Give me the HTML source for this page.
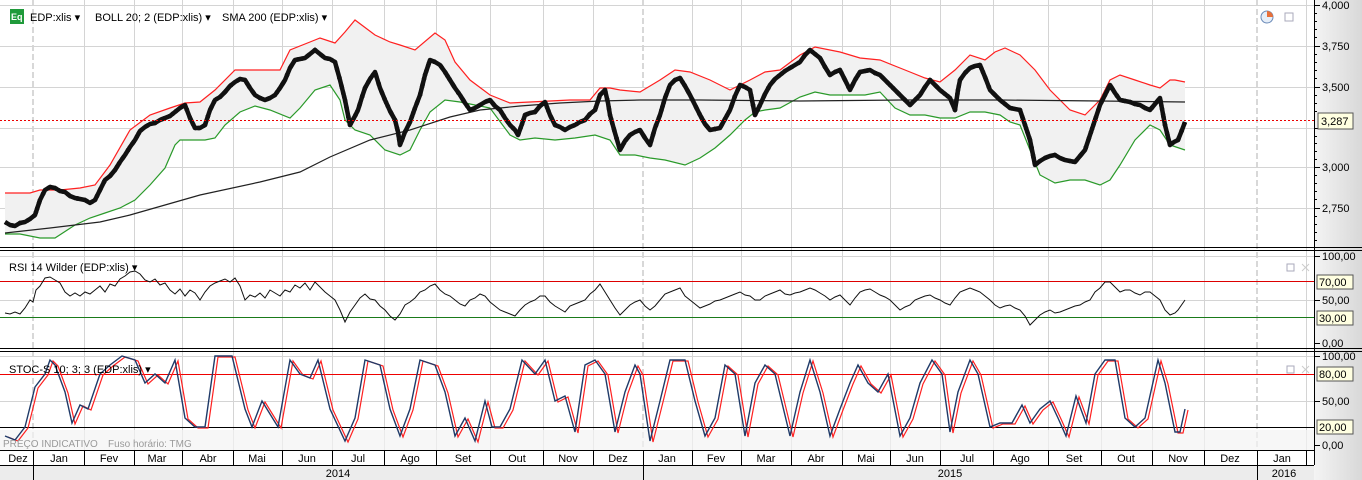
<!DOCTYPE html>
<html><head><meta charset="utf-8"><style>
html,body{margin:0;padding:0;width:1362px;height:480px;overflow:hidden;background:#fff;font-family:"Liberation Sans",Tahoma,sans-serif;}
svg{display:block}
text{font-family:"Liberation Sans",sans-serif;font-size:11px;fill:#000}
</style></head><body>
<svg width="1362" height="480" viewBox="0 0 1362 480" xmlns="http://www.w3.org/2000/svg">
<defs>
<linearGradient id="ax" x1="0" x2="1" y1="0" y2="0"><stop offset="0" stop-color="#f4f4f4"/><stop offset="1" stop-color="#d8d8d8"/></linearGradient>
</defs>
<rect x="0" y="0" width="1362" height="480" fill="#fff"/>
<rect x="1314" y="0" width="48" height="480" fill="url(#ax)"/>
<g stroke="#d4d4d4" stroke-width="1">
<path d="M84.5 0V450M134.5 0V450M182.5 0V450M233.5 0V450M282.5 0V450M332.5 0V450M384.5 0V450M436.5 0V450M490.5 0V450M543.5 0V450M593.5 0V450M692.5 0V450M741.5 0V450M791.5 0V450M842.5 0V450M890.5 0V450M940.5 0V450M993.5 0V450M1048.5 0V450M1101.5 0V450M1152.5 0V450M1204.5 0V450M1306.5 0V450"/>
</g>
<g stroke="#d8d8d8" stroke-width="2" stroke-dasharray="6,3">
<path d="M33 0V450M643 0V450M1257 0V450"/>
</g>
<g stroke="#d4d4d4"><path d="M0 5.5H1314M0 46.5H1314M0 87.5H1314M0 128.5H1314M0 167.5H1314M0 208.5H1314M0 300.5H1314M0 401.5H1314M0 256.5H1314M0 356.5H1314"/></g>
<polygon fill="#f1f1f1" points="5,193 30,193 40,190 60,190 80,188 95,185 110,165 130,130 150,115 170,108 185,103 200,102 215,90 235,70 260,70 280,70 290,50 310,42 320,38 335,43 345,32 355,20 375,35 390,42 400,45 415,50 435,33 445,40 455,62 470,80 490,95 510,103 530,102 550,101 570,100 590,100 600,88 610,88 620,90 640,92 660,80 675,70 690,72 710,80 730,90 750,80 765,72 780,70 800,55 815,47 840,52 860,58 880,60 900,68 910,72 925,78 940,82 955,70 970,55 985,60 995,52 1005,48 1020,55 1035,70 1050,90 1070,110 1085,115 1100,100 1110,80 1120,75 1135,80 1150,85 1160,88 1170,80 1175,80 1185,82 1185,150 1170,145 1160,130 1150,125 1135,140 1120,165 1110,180 1100,185 1085,180 1070,180 1055,183 1040,175 1030,150 1020,125 1010,122 1000,115 985,112 970,112 955,118 940,118 925,115 910,115 895,108 880,92 865,95 845,95 830,95 815,92 800,97 780,108 765,110 755,112 745,120 730,135 715,148 700,158 685,165 665,160 650,158 635,155 620,155 610,140 595,135 575,138 555,140 535,138 520,140 510,135 490,108 475,105 460,102 445,100 430,112 420,130 410,150 400,155 385,150 370,135 355,130 345,120 340,100 330,85 315,90 300,108 290,118 270,110 255,106 240,112 225,125 215,138 205,140 180,140 175,145 165,168 150,185 135,200 120,208 105,213 90,218 75,225 55,238 40,238 20,234 5,234"/>
<polyline fill="none" stroke="#ff2020" stroke-width="1.2" points="5,193 30,193 40,190 60,190 80,188 95,185 110,165 130,130 150,115 170,108 185,103 200,102 215,90 235,70 260,70 280,70 290,50 310,42 320,38 335,43 345,32 355,20 375,35 390,42 400,45 415,50 435,33 445,40 455,62 470,80 490,95 510,103 530,102 550,101 570,100 590,100 600,88 610,88 620,90 640,92 660,80 675,70 690,72 710,80 730,90 750,80 765,72 780,70 800,55 815,47 840,52 860,58 880,60 900,68 910,72 925,78 940,82 955,70 970,55 985,60 995,52 1005,48 1020,55 1035,70 1050,90 1070,110 1085,115 1100,100 1110,80 1120,75 1135,80 1150,85 1160,88 1170,80 1175,80 1185,82"/>
<polyline fill="none" stroke="#2a9a2a" stroke-width="1.2" points="5,234 20,234 40,238 55,238 75,225 90,218 105,213 120,208 135,200 150,185 165,168 175,145 180,140 205,140 215,138 225,125 240,112 255,106 270,110 290,118 300,108 315,90 330,85 340,100 345,120 355,130 370,135 385,150 400,155 410,150 420,130 430,112 445,100 460,102 475,105 490,108 510,135 520,140 535,138 555,140 575,138 595,135 610,140 620,155 635,155 650,158 665,160 685,165 700,158 715,148 730,135 745,120 755,112 765,110 780,108 800,97 815,92 830,95 845,95 865,95 880,92 895,108 910,115 925,115 940,118 955,118 970,112 985,112 1000,115 1010,122 1020,125 1030,150 1040,175 1055,183 1070,180 1085,180 1100,185 1110,180 1120,165 1135,140 1150,125 1160,130 1170,145 1185,150"/>
<polyline fill="none" stroke="#222" stroke-width="1.2" points="5,233 50,228 100,222 130,215 200,195 260,182 300,172 330,157 370,140 410,130 450,117 480,110 520,106 560,103 600,101 640,100 700,100 800,101 900,100 1000,100 1100,101 1185,102"/>
<g fill="none" stroke-linejoin="round">
<polyline id="pr" stroke="#111" stroke-width="4.5" points="5,222 10,225 15,226 20,223 25,222 30,219 35,215 40,200 45,190 50,187 55,188 60,191 65,192 70,196 75,198 80,199 85,200 90,203 95,200 100,190 105,180 110,176 115,170 120,162 125,155 130,147 135,140 140,131 145,127 150,124 155,123 160,120 165,118 170,116 175,112 180,108 185,105 190,118 195,128 200,128 205,125 210,110 215,100 220,97 225,92 230,86 235,82 240,79 245,80 250,88 255,95 260,98 265,100 270,98 275,95 280,88 285,80 290,68 295,60 300,59 305,58 310,54 315,50 320,54 325,58 330,59 335,62 340,80 345,100 348,115 350,125 355,116 358,110 362,97 365,88 370,79 375,72 380,88 385,100 390,111 395,120 398,132 400,145 405,132 410,122 415,108 420,95 425,75 430,60 435,62 440,65 445,72 450,80 455,88 460,95 465,103 470,110 475,108 480,105 485,102 490,100 495,106 500,110 505,118 510,125 515,130 518,135 522,124 525,115 530,113 535,112 540,106 545,102 550,115 555,125 560,127 565,130 570,127 575,125 580,122 585,120 590,114 595,110 600,95 605,90 608,103 610,115 615,133 620,150 625,141 630,135 635,132 640,130 645,138 650,145 655,128 660,115 665,98 670,85 675,80 680,78 685,86 690,95 695,105 700,115 705,124 710,130 715,129 720,128 725,119 730,110 735,96 740,85 745,87 750,90 755,115 760,105 765,94 770,85 775,79 780,75 785,71 790,68 795,65 800,62 805,55 810,50 815,54 820,58 825,67 830,75 835,72 840,70 845,80 850,90 855,80 860,72 865,71 870,70 875,73 880,75 885,80 890,85 895,90 900,95 905,100 910,105 915,100 920,95 925,87 930,80 935,85 940,90 945,94 950,98 955,110 958,90 960,80 965,73 970,68 975,66 980,65 985,77 990,90 995,95 1000,100 1005,104 1010,108 1015,109 1020,110 1025,125 1030,140 1033,155 1035,165 1040,161 1045,158 1050,156 1055,155 1060,158 1065,160 1070,161 1075,162 1080,156 1085,150 1090,135 1095,120 1100,105 1105,95 1110,85 1115,93 1120,100 1125,101 1130,102 1135,104 1140,105 1145,108 1150,110 1155,104 1160,98 1165,125 1170,145 1174,142 1178,140 1182,130 1185,122"/>
<use href="#pr" stroke="#8ccf66" stroke-width="3" stroke-dasharray="2,6"/>
<use href="#pr" stroke="#e02020" stroke-width="3" stroke-dasharray="2,8" stroke-dashoffset="4"/>
</g>
<line x1="0" y1="120.5" x2="1314" y2="120.5" stroke="#e00" stroke-dasharray="2,2"/>
<rect x="10" y="9" width="14" height="15" fill="#1f9a3a"/>
<text x="11" y="20" style="font-size:9px;fill:#fff;font-weight:bold">Eq</text>
<text x="30" y="21">EDP:xlis ▾</text>
<text x="95" y="21">BOLL 20; 2 (EDP:xlis) ▾</text>
<text x="222" y="21">SMA 200 (EDP:xlis) ▾</text>
<circle cx="1267" cy="17" r="6" fill="#e6eef8" stroke="#6a8ab8"/>
<path d="M1267 17V11A6 6 0 0 1 1273 17Z" fill="#e8703a"/>
<rect x="1285" y="13" width="8" height="8" fill="none" stroke="#aab"/>
<g stroke="#000"><path d="M0 247.5H1362M0 250.5H1362M0 348.5H1362M0 351.5H1362"/></g>
<line x1="0" y1="281.5" x2="1314" y2="281.5" stroke="#d00"/>
<line x1="0" y1="317.5" x2="1314" y2="317.5" stroke="#1a7a1a"/>
<polyline fill="none" stroke="#111" stroke-width="1" points="5,313 10,314 15,312 20,314 25,308 30,300 33,302 36,290 40,286 45,278 50,277 55,280 60,283 65,292 70,296 75,293 80,296 85,292 90,294 95,290 100,286 105,292 110,284 115,286 120,279 125,276 130,272 135,271 140,274 145,280 150,282 155,279 160,285 165,283 170,290 175,294 180,289 185,296 190,290 195,293 200,300 205,292 210,286 215,283 220,281 225,279 230,282 235,278 240,286 245,300 250,295 255,297 260,293 265,298 270,290 275,293 280,296 285,290 290,292 295,285 300,288 305,283 310,290 315,282 320,287 325,292 330,296 335,300 340,310 345,322 350,312 355,305 360,298 365,294 370,299 375,300 380,306 385,310 390,316 395,320 400,314 405,305 410,302 415,298 420,292 425,290 430,286 435,284 440,290 445,294 450,296 455,300 460,304 465,306 470,300 475,298 480,294 485,296 490,302 495,306 500,310 505,312 510,314 515,316 520,310 525,305 530,302 535,300 540,296 545,296 550,302 555,306 560,309 565,312 570,306 575,304 580,302 585,300 590,294 595,290 600,284 605,292 610,300 615,308 620,315 625,310 630,305 635,302 640,300 645,306 650,310 655,306 660,300 665,294 670,292 675,290 680,288 685,296 690,300 695,304 700,308 705,306 710,304 715,301 720,300 725,298 730,296 735,294 740,292 745,295 750,296 755,300 760,300 765,296 770,294 775,292 780,290 785,294 790,295 795,293 800,292 805,290 810,288 815,290 820,293 825,296 830,300 835,297 840,295 845,300 850,305 855,298 860,292 865,290 870,289 875,292 880,295 885,297 890,300 895,305 900,310 905,307 910,305 915,300 920,298 925,296 930,295 935,298 940,300 945,303 950,305 955,298 960,292 965,290 970,288 975,290 980,292 985,296 990,300 995,305 1000,308 1005,306 1010,305 1015,308 1020,310 1025,316 1030,325 1035,320 1040,315 1045,312 1050,310 1055,313 1060,312 1065,310 1070,308 1075,306 1080,305 1085,302 1090,300 1095,292 1100,288 1105,282 1110,282 1115,287 1120,292 1125,290 1130,290 1135,293 1140,295 1145,292 1150,292 1155,296 1160,300 1165,310 1170,315 1175,313 1178,310 1185,300"/>
<text x="9" y="271">RSI 14 Wilder (EDP:xlis) ▾</text>
<g fill="none" stroke="#aab"><rect x="1287" y="264" width="7" height="7"/><path d="M1302 264l7 7M1309 264l-7 7" stroke="#ccc"/></g>
<g fill="none" stroke="#aab"><rect x="1287" y="366" width="7" height="7"/><path d="M1302 366l7 7M1309 366l-7 7" stroke="#ccc"/></g>
<line x1="0" y1="374.5" x2="1314" y2="374.5" stroke="#e00"/>
<line x1="0" y1="427.5" x2="1314" y2="427.5" stroke="#000"/>
<rect x="0" y="430" width="1314" height="20" fill="#f3f3f3" opacity="0.7"/>
<polyline id="st" fill="none" stroke="#ff2020" stroke-width="1.2" transform="translate(3,1)" points="5,436 15,440 25,427 35,387 45,374 50,360 55,365 65,392 72,423 80,405 88,409 100,374 110,365 122,356 135,360 145,383 155,374 165,383 175,360 185,418 195,427 205,427 215,356 232,356 245,409 252,427 262,401 270,414 278,427 290,360 300,374 310,378 318,360 330,409 345,441 355,418 365,360 380,365 390,409 400,436 410,409 420,360 435,365 445,392 455,436 465,418 475,441 485,401 492,427 500,427 510,409 522,360 535,374 545,360 555,401 565,396 575,432 585,365 595,360 605,374 615,432 625,392 635,365 640,374 650,441 660,401 670,360 685,360 695,401 705,436 715,418 725,365 735,374 745,436 755,383 765,365 775,374 790,436 800,392 810,360 820,392 830,436 840,409 850,383 858,365 868,383 878,392 888,374 900,436 910,418 920,383 932,360 942,374 950,432 958,392 970,360 978,374 990,427 1000,423 1012,423 1022,405 1030,423 1040,409 1050,401 1058,418 1066,436 1076,396 1086,423 1095,374 1105,360 1115,360 1125,418 1135,427 1145,418 1158,360 1165,383 1175,432 1180,432 1185,409"/>
<polyline fill="none" stroke="#1f3a68" stroke-width="1.4" points="5,436 15,440 25,427 35,387 45,374 50,360 55,365 65,392 72,423 80,405 88,409 100,374 110,365 122,356 135,360 145,383 155,374 165,383 175,360 185,418 195,427 205,427 215,356 232,356 245,409 252,427 262,401 270,414 278,427 290,360 300,374 310,378 318,360 330,409 345,441 355,418 365,360 380,365 390,409 400,436 410,409 420,360 435,365 445,392 455,436 465,418 475,441 485,401 492,427 500,427 510,409 522,360 535,374 545,360 555,401 565,396 575,432 585,365 595,360 605,374 615,432 625,392 635,365 640,374 650,441 660,401 670,360 685,360 695,401 705,436 715,418 725,365 735,374 745,436 755,383 765,365 775,374 790,436 800,392 810,360 820,392 830,436 840,409 850,383 858,365 868,383 878,392 888,374 900,436 910,418 920,383 932,360 942,374 950,432 958,392 970,360 978,374 990,427 1000,423 1012,423 1022,405 1030,423 1040,409 1050,401 1058,418 1066,436 1076,396 1086,423 1095,374 1105,360 1115,360 1125,418 1135,427 1145,418 1158,360 1165,383 1175,432 1180,432 1185,409"/>
<text x="9" y="373">STOC-S 10; 3; 3 (EDP:xlis) ▾</text>
<text x="3" y="447" style="fill:#9a9a9a;font-size:10px">PREÇO INDICATIVO</text>
<text x="108" y="447" style="fill:#9a9a9a;font-size:10px">Fuso horário: TMG</text>
<line x1="1314.5" y1="0" x2="1314.5" y2="465" stroke="#000"/>
<g stroke="#000">
<path d="M1314 5.5h6M1314 46.5h6M1314 87.5h6M1314 128.5h6M1314 167.5h6M1314 208.5h6"/>
<path d="M1314 13.5h3M1314 21.5h3M1314 29.5h3M1314 37.5h3M1314 54.5h3M1314 62.5h3M1314 70.5h3M1314 78.5h3M1314 95.5h3M1314 103.5h3M1314 111.5h3M1314 136.5h3M1314 143.5h3M1314 151.5h3M1314 159.5h3M1314 175.5h3M1314 183.5h3M1314 191.5h3M1314 199.5h3M1314 216.5h3M1314 224.5h3M1314 232.5h3M1314 240.5h3"/>
<path d="M1314 256.5h6M1314 300.5h6M1314 343.5h6M1314 356.5h6M1314 401.5h6M1314 445.5h6"/>
</g>
<text x="1322" y="9">4,000</text>
<text x="1322" y="50">3,750</text>
<text x="1322" y="91">3,500</text>
<text x="1322" y="171">3,000</text>
<text x="1322" y="212">2,750</text>
<rect x="1318" y="113" width="35" height="16" fill="#ffffe1" stroke="#555"/>
<text x="1321" y="125">3,287</text>
<text x="1322" y="260">100,00</text>
<rect x="1317" y="275" width="36" height="14" fill="#ffffe1" stroke="#555"/>
<text x="1319" y="286">70,00</text>
<text x="1322" y="304">50,00</text>
<rect x="1317" y="311" width="36" height="14" fill="#ffffe1" stroke="#555"/>
<text x="1319" y="322">30,00</text>
<text x="1322" y="347">0,00</text>
<text x="1322" y="360">100,00</text>
<rect x="1317" y="367" width="36" height="14" fill="#ffffe1" stroke="#555"/>
<text x="1319" y="378">80,00</text>
<text x="1322" y="405">50,00</text>
<rect x="1317" y="420" width="36" height="14" fill="#ffffe1" stroke="#555"/>
<text x="1319" y="431">20,00</text>
<text x="1322" y="449">0,00</text>
<rect x="0" y="450" width="1314" height="15" fill="#fff"/>
<rect x="0" y="465" width="1314" height="15" fill="#ececec"/>
<g stroke="#000"><path d="M0 450.5H1314M0 465.5H1314"/>
<path d="M33.5 450V480M84.5 450V465M134.5 450V465M182.5 450V465M233.5 450V465M282.5 450V465M332.5 450V465M384.5 450V465M436.5 450V465M490.5 450V465M543.5 450V465M593.5 450V465M643.5 450V480M692.5 450V465M741.5 450V465M791.5 450V465M842.5 450V465M890.5 450V465M940.5 450V465M993.5 450V465M1048.5 450V465M1101.5 450V465M1152.5 450V465M1204.5 450V465M1257.5 450V480M1306.5 450V465"/></g>
<g text-anchor="middle">
<text x="18" y="462">Dez</text><text x="59" y="462">Jan</text><text x="109" y="462">Fev</text><text x="157" y="462">Mar</text><text x="208" y="462">Abr</text><text x="257" y="462">Mai</text><text x="307" y="462">Jun</text><text x="358" y="462">Jul</text><text x="410" y="462">Ago</text><text x="463" y="462">Set</text><text x="517" y="462">Out</text><text x="568" y="462">Nov</text><text x="618" y="462">Dez</text><text x="667" y="462">Jan</text><text x="716" y="462">Fev</text><text x="766" y="462">Mar</text><text x="816" y="462">Abr</text><text x="866" y="462">Mai</text><text x="915" y="462">Jun</text><text x="967" y="462">Jul</text><text x="1020" y="462">Ago</text><text x="1074" y="462">Set</text><text x="1126" y="462">Out</text><text x="1178" y="462">Nov</text><text x="1230" y="462">Dez</text><text x="1282" y="462">Jan</text>
<text x="338" y="477">2014</text><text x="950" y="477">2015</text><text x="1284" y="477">2016</text>
</g>
</svg>
</body></html>
